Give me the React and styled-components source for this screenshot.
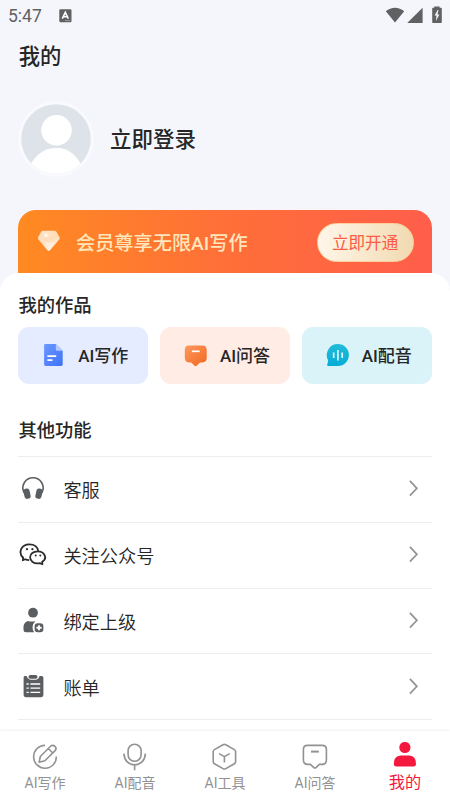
import React from "react";
import styled, { createGlobalStyle } from "styled-components";

const GlobalStyle = createGlobalStyle`
  * {
    box-sizing: border-box;
  }
  body {
    margin: 0;
    font-family: Roboto, "Noto Sans CJK SC", sans-serif;
    color: #262626;
    background: #f5f6fb;
  }
`;

const works = [
  { label: "AI写作", color: "#e5ecff", icon: <DocIcon /> },
  { label: "AI问答", color: "#ffece4", icon: <AskIcon /> },
  { label: "AI配音", color: "#daf3f9", icon: <VoiceIcon /> },
];

const features = [
  { label: "客服", icon: <HeadsetIcon /> },
  { label: "关注公众号", icon: <WechatIcon /> },
  { label: "绑定上级", icon: <BindIcon /> },
  { label: "账单", icon: <BillIcon /> },
];

const tabs = [
  { label: "AI写作", icon: <WriteTabIcon /> },
  { label: "AI配音", icon: <MicTabIcon /> },
  { label: "AI工具", icon: <ToolTabIcon /> },
  { label: "AI问答", icon: <AskTabIcon /> },
  { label: "我的", icon: <MineTabIcon />, active: true },
];

export default function App() {
  return (
    <>
      <GlobalStyle />
      <Screen>
        <StatusBar>
          <Clock>5:47</Clock>
          <KeyboardIcon />
          <StatusIcons />
        </StatusBar>
        <PageTitle>我的</PageTitle>
        <Profile>
          <Avatar>
            <AvatarIcon />
          </Avatar>
          <LoginText>立即登录</LoginText>
        </Profile>
        <VipBanner>
          <DiamondIcon />
          <VipText>会员尊享无限AI写作</VipText>
          <OpenButton>立即开通</OpenButton>
        </VipBanner>
        <Sheet>
          <SectionTitle>我的作品</SectionTitle>
          <Works>
            {works.map((item) => (
              <WorkCard key={item.label} $color={item.color}>
                {item.icon}
                <span>{item.label}</span>
              </WorkCard>
            ))}
          </Works>
          <SectionTitle>其他功能</SectionTitle>
          <FeatureList>
            {features.map((item) => (
              <Feature key={item.label}>
                {item.icon}
                <FeatureLabel>{item.label}</FeatureLabel>
                <Chevron />
              </Feature>
            ))}
          </FeatureList>
        </Sheet>
        <TabBar>
          {tabs.map((tab) => (
            <Tab key={tab.label} $active={tab.active}>
              {tab.icon}
              <TabLabel $active={tab.active}>{tab.label}</TabLabel>
            </Tab>
          ))}
        </TabBar>
      </Screen>
    </>
  );
}

function KeyboardIcon() {
  return (
    <svg width="13" height="14" viewBox="0 0 13 14">
      <rect x="0.3" y="0.3" width="12.2" height="13" rx="1.2" fill="#606163" />
      <path
        d="M3.3 9.6 6.3 3.3 9.3 9.6M4.5 7.7H8.1"
        fill="none"
        stroke="#fff"
        strokeWidth="1.6"
      />
      <path d="M6 11.6H11" stroke="#a5a6a8" strokeWidth="0.8" />
    </svg>
  );
}

function StatusIcons() {
  return (
    <StatusGroup width="58" height="18" viewBox="0 0 58 18" fill="#606163">
      <path d="M0.8 5.2C6.2.5 13.8.5 19.2 5.2L10 16.6Z" />
      <path d="M37.6 1.8V17H22.2Z" />
      <path d="M49.2 1.8V.6H54.6V1.8H56.2Q56.8 1.8 56.8 2.6V16.2Q56.8 17 56 17H48Q47.2 17 47.2 16.2V2.6Q47.2 1.8 48 1.8Z" />
      <path d="M52.6 4 49.6 9.6H51.5L50.9 15 54.4 8.4H52.4L53.5 4Z" fill="#f5f6fb" />
    </StatusGroup>
  );
}

function AvatarIcon() {
  return (
    <svg width="70" height="70" viewBox="0 0 70 70">
      <clipPath id="avatar">
        <circle cx="35" cy="35" r="34.8" />
      </clipPath>
      <g clipPath="url(#avatar)">
        <rect width="70" height="70" fill="#dde3e8" />
        <circle cx="35.5" cy="26.3" r="15.3" fill="#fff" />
        <path d="M8 63C14 51.5 22.5 44 35.5 44S55 51.5 62 63L60 70H10Z" fill="#fff" />
      </g>
    </svg>
  );
}

function DiamondIcon() {
  return (
    <svg width="24" height="22" viewBox="0 0 24 22">
      <defs>
        <linearGradient id="gem" x1="0" y1="0" x2="0.4" y2="1">
          <stop offset="0" stopColor="#ffe5c6" />
          <stop offset="0.55" stopColor="#ffdcb7" />
          <stop offset="1" stopColor="#fff4e5" />
        </linearGradient>
        <radialGradient id="shine">
          <stop offset="0" stopColor="#fff" />
          <stop offset="1" stopColor="#fff" stopOpacity="0" />
        </radialGradient>
      </defs>
      <path
        d="M5.8.8H17.6Q18.6.8 19.2 1.6L22.5 7.3Q23.1 8.3 22.4 9.2L13 20.2Q11.7 21.6 10.4 20.2L1.2 9.2Q.5 8.3 1.1 7.3L4.3 1.6Q4.8.8 5.8.8Z"
        fill="url(#gem)"
      />
      <path d="M4 8.5Q11.8 16.5 19.5 8.5L11.8 18.5Z" fill="#fff" opacity="0.25" />
      <circle cx="9.3" cy="5.2" r="3" fill="url(#shine)" />
    </svg>
  );
}

function DocIcon() {
  return (
    <svg width="24" height="24" viewBox="0 0 24 24">
      <defs>
        <linearGradient id="doc" x1="0" y1="0" x2="1" y2="1">
          <stop offset="0" stopColor="#6c98ff" />
          <stop offset="1" stopColor="#3e72fa" />
        </linearGradient>
      </defs>
      <path
        d="M4.2 1H14.8L21.7 7.8V21.3Q21.7 22.9 20.1 22.9H4.7Q3.1 22.9 3.1 21.3V2.4Q3.1 1 4.2 1Z"
        fill="url(#doc)"
      />
      <path d="M14.8 1 21.7 7.8H16.3Q14.8 7.8 14.8 6.3Z" fill="#b3c9ff" />
      <path d="M6.4 13.1H15.2M6.4 17.1H11.4" stroke="#fff" strokeWidth="1.7" />
    </svg>
  );
}

function AskIcon() {
  return (
    <svg width="24" height="24" viewBox="0 0 24 24">
      <defs>
        <linearGradient id="ask" x1="0" y1="0" x2="1" y2="1">
          <stop offset="0" stopColor="#ff985e" />
          <stop offset="1" stopColor="#f1671f" />
        </linearGradient>
      </defs>
      <path
        d="M6 2.6H19Q23.7 2.6 23.7 7V15Q23.7 19.2 19.5 19.4H17L13.6 22.7Q12.6 23.6 11.6 22.7L8.2 19.4H6Q1.8 19.2 1.8 15V7Q1.8 2.6 6 2.6Z"
        fill="url(#ask)"
      />
      <path d="M8.9 8.3H16.6" stroke="#fff" strokeWidth="1.7" />
    </svg>
  );
}

function VoiceIcon() {
  return (
    <svg width="24" height="24" viewBox="0 0 24 24">
      <defs>
        <linearGradient id="voice" x1="0" y1="0" x2="0" y2="1">
          <stop offset="0" stopColor="#21bcd9" />
          <stop offset="1" stopColor="#05acd6" />
        </linearGradient>
      </defs>
      <path
        d="M12.9 1A11 11 0 1 1 12.9 23H3.1Q1.9 23 2.2 21.8L3.2 17.4A11 11 0 0 1 12.9 1Z"
        fill="url(#voice)"
      />
      <path d="M8.7 9.4V14.9M12.9 7V17.4M17.2 9.4V14.9" stroke="#e1f8fd" strokeWidth="1.7" />
    </svg>
  );
}

function HeadsetIcon() {
  return (
    <svg width="28" height="28" viewBox="0 0 28 28">
      <path
        d="M5.2 18.8A10.1 10.1 0 1 1 22.8 18.8"
        fill="none"
        stroke="#5b5e61"
        strokeWidth="1.6"
      />
      <rect x="5" y="14.6" width="6.2" height="10.2" rx="2.6" transform="rotate(-13 8 20)" fill="#5b5e61" />
      <rect x="16.8" y="14.6" width="6.2" height="10.2" rx="2.6" transform="rotate(13 20 20)" fill="#5b5e61" />
    </svg>
  );
}

function WechatIcon() {
  return (
    <svg width="28" height="28" viewBox="0 0 28 28" fill="none">
      <path
        d="M10.2 20.1Q7.8 20 6.2 19.2L3.8 20.3 4.2 17.7C-.8 13.5 1.4 4.3 10.5 4.3 15.6 4.3 18.7 7.3 19.2 10.8"
        stroke="#2c2d2e"
        strokeWidth="1.8"
        strokeLinejoin="round"
      />
      <path
        d="M18.8 11.3C25.6 11.3 28.8 18.5 23.2 21.8L23.4 24.3 20.8 23.1C14.4 24.2 11.1 20.8 11.1 17.3 11.1 13.8 14.4 11.3 18.8 11.3Z"
        stroke="#2c2d2e"
        strokeWidth="1.8"
        strokeLinejoin="round"
      />
      <g fill="#2c2d2e">
        <circle cx="8" cy="9.2" r="1.1" />
        <circle cx="13.4" cy="9.2" r="1.1" />
        <circle cx="16.7" cy="15.5" r="1" />
        <circle cx="21.3" cy="15.5" r="1" />
      </g>
    </svg>
  );
}

function BindIcon() {
  return (
    <svg width="28" height="28" viewBox="0 0 28 28" fill="#5b5e61">
      <circle cx="14" cy="6.7" r="4.9" />
      <path d="M8.8 15Q12.2 16 16.4 15.2 13.5 17.7 13.5 21.2 13.5 24.2 15.2 26.3H7Q4.5 26.3 4.5 24V20.8Q4.7 16.6 8.8 15Z" />
      <rect x="15.6" y="17.2" width="8.8" height="9.1" rx="3.2" />
      <path d="M20 19.2V24.3M17.4 21.75H22.6" stroke="#fff" strokeWidth="1.9" />
    </svg>
  );
}

function BillIcon() {
  return (
    <svg width="28" height="28" viewBox="0 0 28 28">
      <path
        d="M5.6 4H7.6Q9.2 7.8 12 7.8H16.6Q19.4 7.8 20.6 4H22.7Q24.4 4 24.4 5.8V22.6Q24.4 25.2 21.9 25.2H7Q4.6 25.2 4.6 22.6V5.8Q4.6 4 5.6 4Z"
        fill="#5b5e61"
      />
      <rect x="9.5" y="2.9" width="9" height="3.9" rx="1.8" fill="#5b5e61" />
      <path
        d="M7.5 12H9.7M11.4 12H21.2M7.5 16.2H9.7M11.4 16.2H21.2M7.5 20.4H9.7M11.4 20.4H21.2"
        stroke="#fff"
        strokeWidth="1.3"
      />
    </svg>
  );
}

function Chevron() {
  return (
    <svg width="10" height="18" viewBox="0 0 10 18">
      <path d="M0.9 1.9 7.9 9.3 0.9 16.7" fill="none" stroke="#939393" strokeWidth="1.7" />
    </svg>
  );
}

function WriteTabIcon() {
  return (
    <TabSvg viewBox="0 0 28 28">
      <path d="M14 2.4A11.4 11.4 0 1 0 25.4 13.6" />
      <path d="M9.3 13.5 19.3 3.5Q21.7 1.2 24 3.3 26.2 5.5 23.9 7.9L13.9 17.8 8.1 19.3ZM17.5 5.7 21.8 10" />
    </TabSvg>
  );
}

function MicTabIcon() {
  return (
    <TabSvg viewBox="0 0 28 28">
      <rect x="7.1" y="1.2" width="13" height="17" rx="6.4" />
      <path d="M2.9 10.6C3.2 17.8 7.9 21.7 13.6 21.7S24 17.8 24.4 10.6M13.6 21.7V27.3" />
    </TabSvg>
  );
}

function ToolTabIcon() {
  return (
    <TabSvg viewBox="0 0 28 28">
      <path d="M12 1.7Q13.4 1 14.8 1.7L23.4 6.6Q24.6 7.3 24.6 8.6V18.6Q24.6 20 23.4 20.7L14.8 25.6Q13.4 26.4 12 25.6L3.4 20.7Q2.2 20 2.2 18.6V8.6Q2.2 7.3 3.4 6.6Z" />
      <path d="M8.1 10.6 13.4 13.6 18.7 10.6M13.4 13.6V19.6" />
    </TabSvg>
  );
}

function AskTabIcon() {
  return (
    <TabSvg viewBox="0 0 28 28">
      <path d="M6.4 2.4H21.2Q25.4 2.4 25.4 6.6V17.1Q25.4 21.1 21.4 21.4H18.4L15.2 24.4Q13.9 25.6 12.6 24.4L9.4 21.4H6.4Q2.4 21.1 2.4 17.1V6.6Q2.4 2.4 6.4 2.4Z" />
      <path d="M10 8.6H17.8" strokeWidth="2" />
    </TabSvg>
  );
}

function MineTabIcon() {
  return (
    <svg width="28" height="28" viewBox="0 0 28 28" fill="#f5183e">
      <circle cx="13.9" cy="5.5" r="5.6" />
      <path d="M9.7 13.5H18.5Q24.9 14.4 24.9 21V22.2Q24.9 24.6 22.5 24.6H5.3Q2.9 24.6 2.9 22.2V21Q2.9 14.4 9.7 13.5Z" />
    </svg>
  );
}

const Screen = styled.div`
  height: 800px;
  width: 450px;
  overflow: hidden;
  display: flex;
  flex-direction: column;
  background: #f5f6fb;
`;

const StatusBar = styled.div`
  height: 30px;
  padding: 1px 8px 0;
  display: flex;
  align-items: center;
`;

const Clock = styled.span`
  width: 51px;
  font-size: 17.5px;
  line-height: 30px;
  color: #606163;
`;

const StatusGroup = styled.svg`
  margin: 0 -1px 2px auto;
`;

const PageTitle = styled.h1`
  margin: 0;
  padding-left: 18.8px;
  height: 54px;
  font-size: 21.3px;
  line-height: 54px;
  font-weight: 500;
`;

const Profile = styled.div`
  height: 110px;
  padding-left: 18px;
  display: flex;
  align-items: center;
  gap: 16px;
`;

const Avatar = styled.div`
  width: 76px;
  height: 76px;
  display: flex;
  align-items: center;
  justify-content: center;
  border-radius: 50%;
  background: #f9fafd;
`;

const LoginText = styled.div`
  padding-bottom: 3px;
  font-size: 21.5px;
  font-weight: 500;
`;

const VipBanner = styled.div`
  height: 64px;
  flex-shrink: 0;
  margin: 16px 18.4px 0;
  padding: 0 18px 0 19px;
  display: flex;
  align-items: center;
  border-radius: 18px 18px 0 0;
  background: linear-gradient(90deg, #ff8a22, #ff6f38 50%, #ff5e4b);

  > svg {
    margin-bottom: 2px;
  }
`;

const VipText = styled.div`
  flex: 1;
  padding: 0 0 1px 14.6px;
  font-size: 19.2px;
  font-weight: 500;
  color: #ffe6bb;
  white-space: nowrap;
`;

const OpenButton = styled.button`
  width: 97px;
  height: 39px;
  padding: 0;
  border: 1px solid #fbd09c;
  border-radius: 20px;
  background: linear-gradient(90deg, #fff6e9, #f1dab1);
  color: #fd5b43;
  font-family: inherit;
  font-size: 16.6px;
`;

const Sheet = styled.main`
  flex: 1;
  min-height: 0;
  margin-top: -1px;
  padding: 10px 18.4px 0;
  border-radius: 19px 19px 0 0;
  background: #fff;
`;

const SectionTitle = styled.h2`
  margin: 0;
  height: 44px;
  font-size: 18.3px;
  line-height: 46px;
  font-weight: 500;
`;

const Works = styled.div`
  display: grid;
  grid-template-columns: repeat(3, 1fr);
  gap: 12px;
  margin-bottom: 24px;
`;

const WorkCard = styled.div`
  height: 57px;
  padding: 0 0 2px 22.8px;
  display: flex;
  align-items: center;
  gap: 13px;
  border-radius: 11px;
  background: ${(props) => props.$color};
  font-size: 17px;
  font-weight: 500;
`;

const FeatureList = styled.div`
  margin-top: 4px;
  border-bottom: 1px solid #eee;
`;

const Feature = styled.div`
  height: 65.8px;
  padding: 0 13px 2px 0.5px;
  display: flex;
  align-items: center;
  border-top: 1px solid #eee;
`;

const FeatureLabel = styled.span`
  flex: 1;
  padding: 2px 0 0 16.5px;
  font-size: 18.2px;
  font-weight: 350;
`;

const TabBar = styled.nav`
  height: 69px;
  position: relative;
  display: grid;
  grid-template-columns: repeat(5, 1fr);
  background: #fff;
  box-shadow: 0 0 3px rgba(0, 0, 0, 0.12);
`;

const Tab = styled.div`
  padding-top: ${(props) => (props.$active ? "11px" : "12px")};
  display: flex;
  flex-direction: column;
  align-items: center;
  color: ${(props) => (props.$active ? "#f5183e" : "#929292")};
`;

const TabSvg = styled.svg`
  width: 28px;
  height: 28px;
  fill: none;
  stroke: #929292;
  stroke-width: 1.6;
  stroke-linejoin: round;
`;

const TabLabel = styled.span`
  font-size: ${(props) => (props.$active ? "16.2px" : "14px")};
  line-height: 25px;
`;
